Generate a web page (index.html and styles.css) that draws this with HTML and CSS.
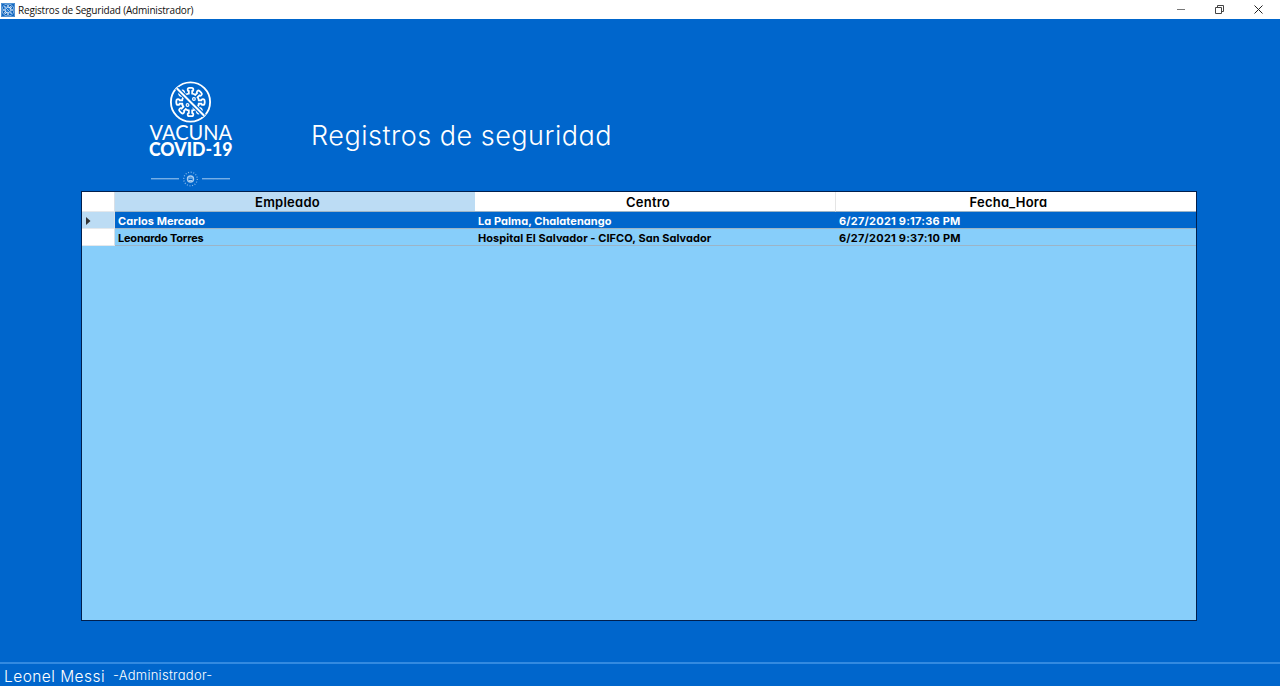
FILE: index.html
```html
<!DOCTYPE html>
<html lang="es">
<head>
<meta charset="utf-8">
<title>Registros de Seguridad (Administrador)</title>
<link rel="stylesheet" href="styles.css">
</head>
<body>
<svg class="defs" width="0" height="0">
  <defs>
    <g id="spikes" fill="none" stroke-linecap="round">
      <path d="M0-12.5V12.5M-12.5 0H12.5M-8.9-8.9L8.9 8.9M-8.9 8.9L8.9-8.9"/>
      <path d="M-1.2-12.7H1.2M-1.2 12.7H1.2M-12.7-1.2V1.2M12.7-1.2V1.2M-9.9-8.1L-8.1-9.9M9.9 8.1L8.1 9.9M-9.9 8.1L-8.1 9.9M9.9-8.1L8.1-9.9"/>
    </g>
    <g id="emblem">
      <circle r="20" fill="none" stroke="#fff" stroke-width="1.9"/>
      <use href="#spikes" stroke="#fff" stroke-width="5.2"/>
      <circle r="9.8" fill="#fff"/>
      <use href="#spikes" stroke="#0066cc" stroke-width="1.6"/>
      <circle r="7.8" fill="#0066cc"/>
      <g fill="none" stroke="#fff" stroke-width="1.2">
        <circle cx="-3" cy="3" r="1.4"/><circle cx="3.5" cy="-3" r="1.4"/><circle cx="3" cy="6" r=".4"/>
      </g>
      <path d="M-14-14L14 14" stroke="#0066cc" stroke-width="4.6"/>
      <path d="M-14-14L14 14" stroke="#fff" stroke-width="2"/>
    </g>
  </defs>
</svg>
<div class="window">
  <header class="titlebar">
    <svg class="app-icon" viewBox="-23 -23 46 46"><rect x="-23" y="-23" width="46" height="46" fill="#0b62bd"/><use href="#emblem"/><rect x="-21" y="-21" width="42" height="42" fill="none" stroke="#5c9bd8" stroke-width="3"/></svg>
    <span class="caption">Registros de Seguridad (Administrador)</span>
    <svg class="controls" width="120" height="19" fill="none">
      <path d="M17 9.5H25" stroke="#777"/>
      <path d="M55.5 7.5H61.5V13.5H55.5ZM57.5 7V5.5H63.5V11.5H62" stroke="#444"/>
      <path d="M94.5 5.5L102.500 13.5M102.500 5.5L94.5 13.5" stroke="#222"/>
    </svg>
  </header>
  <main class="content">
    <div class="heading">
      <svg class="logo" width="100" height="115" viewBox="140 75 100 115">
        <use href="#emblem" transform="translate(190.5 102) scale(.98)"/>
        <text class="logo-thin" x="149.500" y="140" textLength="82.5" lengthAdjust="spacingAndGlyphs">VACUNA</text>
        <text class="logo-bold" x="149" y="156" textLength="83.5" lengthAdjust="spacingAndGlyphs">COVID-19</text>
        <g fill="none" stroke="#a9cdf0">
          <path d="M151 178.800H179M202 178.800H230"/>
          <circle cx="190.5" cy="179" r="6.8" stroke-dasharray="1 1.67" stroke-width="1.2" opacity=".8"/>
          <circle cx="190.5" cy="179" r="3" stroke-width="1.4"/>
          <path d="M188.5 178H192.5M189 180.5H192"/>
        </g>
      </svg>
      <h1 class="title">Registros de seguridad</h1>
    </div>
    <div class="grid">
      <div class="row head">
        <span class="cell marker"></span><span class="cell current">Empleado</span><span class="cell centro">Centro</span><span class="cell">Fecha_Hora</span>
      </div>
      <div class="row selected">
        <span class="cell marker"><svg width="5" height="8"><path d="M0 0L4.5 4L0 8Z" fill="#333"/></svg></span><span class="cell">Carlos Mercado</span><span class="cell">La Palma, Chalatenango</span><span class="cell date">6/27/2021 9:17:36 PM</span>
      </div>
      <div class="row">
        <span class="cell marker"></span><span class="cell name">Leonardo Torres</span><span class="cell">Hospital El Salvador - CIFCO, San Salvador</span><span class="cell date">6/27/2021 9:37:10 PM</span>
      </div>
    </div>
  </main>
  <footer class="status"><span class="user">Leonel Messi</span><span class="role">-Administrador-</span></footer>
</div>
</body>
</html>
```
FILE: styles.css
```css
* { box-sizing: border-box; }
body { margin: 0; font-family: "Century Gothic", Inter, sans-serif; font-feature-settings: "cv11"; }
.defs { display: block; }
.window { width: 1280px; height: 686px; display: flex; flex-direction: column; background: #0066cc; overflow: hidden; white-space: nowrap; }
.titlebar { height: 19px; flex: none; display: flex; align-items: center; padding-left: 1px; background: #fff; }
.app-icon { width: 14px; height: 14px; margin-right: 3px; }
.caption { font: 10px/20px "Open Sans", sans-serif; letter-spacing: -.19px; color: #111; }
.controls { margin-left: auto; }
.content { flex: 1; padding: 56px 83px 0 81px; }
.heading { display: flex; height: 116px; padding-left: 59px; }
.logo { flex: none; }
.logo text { fill: #fff; font-family: Lato, sans-serif; }
.logo .logo-thin { font-size: 21px; font-weight: 400; }
.logo .logo-bold { font-size: 18.5px; font-weight: 900; }
.title { margin: 43px 0 0 71px; color: #fff; font-size: 27px; line-height: 36px; font-weight: 300; letter-spacing: .5px; }
.grid { height: 430px; border: 1px solid #001f4d; background: #87cefa; }
.row { display: grid; grid-template-columns: 33px 360px 361px 1fr; height: 17px; font-size: 11px; font-weight: 650; line-height: 18px; color: #000; }
.cell { height: 17px; padding-left: 3px; border-bottom: 1px solid #9cb4c6; letter-spacing: .06px; }
.name { letter-spacing: -.2px; }
.date { letter-spacing: .22px; }
.marker { background: #fff; border-right: 1px solid #d8dfe6; border-bottom-color: #e4e8ec; }
.row .marker { padding-left: 4px; }
.head { height: 20px; font-size: 13px; font-weight: 600; line-height: 21px; text-align: center; }
.head .cell { height: 20px; padding: 0; background: #fff; letter-spacing: .25px; }
.head .current { padding-right: 15px; background: #bcdcf4; }
.head .centro { padding-right: 14px; border-right: 1px solid #e5e5e5; }
.head .cell:last-child { padding-right: 15px; }
.selected .cell { background: #0066cc; color: #fff; }
.selected .marker { background: #bcdcf4; }
.marker svg { display: block; margin-top: 5px; }
.status { height: 24px; flex: none; border-top: 2px solid #338ae0; display: flex; padding-left: 4px; color: #fff; }
.user { width: 109px; font-size: 15.5px; font-weight: 300; line-height: 25px; letter-spacing: .45px; }
.role { font-size: 13px; font-weight: 300; line-height: 22px; letter-spacing: .27px; }
```
